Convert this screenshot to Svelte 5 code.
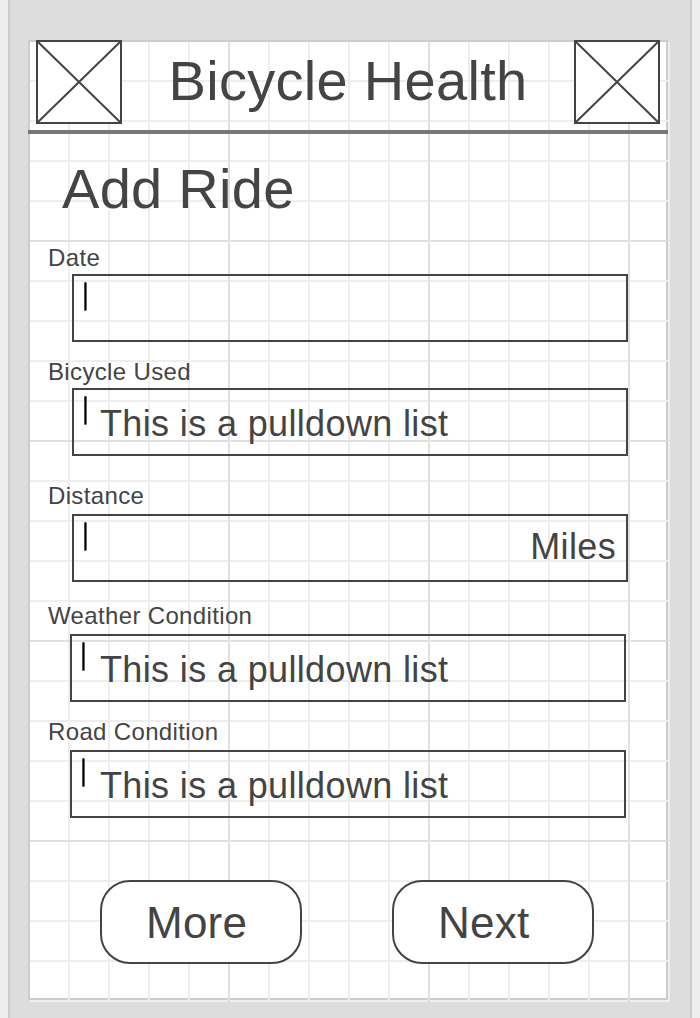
<script>
  const fields = [
    { label: 'Date', before: 23, gap: 2, left: 24, value: '', suffix: '' },
    { label: 'Bicycle Used', before: 16, gap: 2, left: 24, value: 'This is a pulldown list', suffix: '' },
    { label: 'Distance', before: 26, gap: 4, left: 24, value: '', suffix: 'Miles' },
    { label: 'Weather Condition', before: 20, gap: 4, left: 22, value: 'This is a pulldown list', suffix: '' },
    { label: 'Road Condition', before: 16, gap: 4, left: 22, value: 'This is a pulldown list', suffix: '' }
  ];
  const steps = [38, 78, 118, 158];
</script>

{#snippet picture()}
  <svg class="picture" width="86" height="84" viewBox="0 0 86 84">
    <rect x="1" y="1" width="84" height="82" fill="#fff" stroke="#444" stroke-width="2" />
    <path d="M1 1L85 83M85 1L1 83" stroke="#444" stroke-width="2" />
  </svg>
{/snippet}

<main class="phone">
  <section class="screen">
    <svg class="grid" width="640" height="960">
      <defs>
        <pattern id="cells" width="200" height="200" patternUnits="userSpaceOnUse">
          {#each steps as s}
            <rect x={s} y="0" width="2" height="200" fill="#eee" />
            <rect x="0" y={s} width="200" height="2" fill="#eee" />
          {/each}
          <rect x="198" y="0" width="2" height="200" fill="#e0e0e0" />
          <rect x="0" y="198" width="200" height="2" fill="#e0e0e0" />
          <rect x="199" y="199" width="1" height="1" fill="#fafafa" />
        </pattern>
      </defs>
      <rect width="640" height="960" fill="url(#cells)" />
    </svg>
    <div class="content">
      <header>
        {@render picture()}
        <h1>Bicycle Health</h1>
        {@render picture()}
      </header>
      <h2>Add Ride</h2>
      {#each fields as f}
        <div class="field" style="margin-top:{f.before}px">
          <div class="label">{f.label}</div>
          <div class="box" style="margin-top:{f.gap}px;margin-left:{f.left}px">
            <svg class="caret" width="3" height="30"><rect x="0.3" y="0.3" width="2.3" height="28.3" /></svg>
            <span class="value" style="margin-left:{37 - f.left}px">{f.value}</span>
            <span class="suffix">{f.suffix}</span>
          </div>
        </div>
      {/each}
      <div class="actions">
        <button>More</button>
        <button>Next</button>
      </div>
    </div>
  </section>
</main>

<style>
  :global(body) {
    background: #eee;
    overflow: hidden;
  }
  .phone {
    box-sizing: border-box;
    width: 684px;
    height: 1018px;
    margin-left: 8px;
    padding: 40px 18px 0;
    border: solid #ccc;
    border-width: 0 2px;
    background: #ddd;
    color: #444;
    font-family: "Liberation Sans", Arial, sans-serif;
  }
  .screen {
    position: relative;
    box-sizing: border-box;
    width: 640px;
    height: 960px;
    border: 2px solid #ccc;
    background: #fff;
  }
  .grid {
    position: absolute;
    left: 0;
    top: 0;
    display: block;
  }
  .content {
    position: relative;
    margin: -2px;
  }
  header {
    display: flex;
    justify-content: space-between;
    box-sizing: border-box;
    height: 94px;
    padding: 0 8px;
    border-bottom: 4px solid #777;
  }
  .picture {
    display: block;
  }
  h1, h2 {
    margin: 0;
    font-size: 56px;
    font-weight: 400;
    line-height: 64px;
    letter-spacing: 0.29px;
    white-space: nowrap;
  }
  h1 {
    padding-top: 9px;
  }
  h2 {
    padding: 23px 0 0 34px;
  }
  .field {
    padding-left: 20px;
  }
  .label {
    height: 28px;
    font-size: 24px;
    line-height: 28px;
    letter-spacing: 0.35px;
  }
  .box {
    display: flex;
    box-sizing: border-box;
    width: 556px;
    height: 68px;
    border: 2px solid #444;
    font-size: 36px;
    line-height: 68px;
    letter-spacing: 0.36px;
    white-space: nowrap;
  }
  .caret {
    display: block;
    flex: none;
    margin: 6px 0 0 10px;
  }
  .suffix {
    margin: -2px 10px 0 auto;
    line-height: 65px;
  }
  .actions {
    display: flex;
    gap: 90px;
    padding: 62px 0 0 72px;
  }
  button {
    box-sizing: border-box;
    width: 202px;
    height: 84px;
    padding: 1px 0 0 44px;
    border: 2px solid #444;
    border-radius: 30px;
    background: #fff;
    color: inherit;
    font: 44px/80px "Liberation Sans", Arial, sans-serif;
    letter-spacing: 0.25px;
    text-align: left;
  }
</style>
